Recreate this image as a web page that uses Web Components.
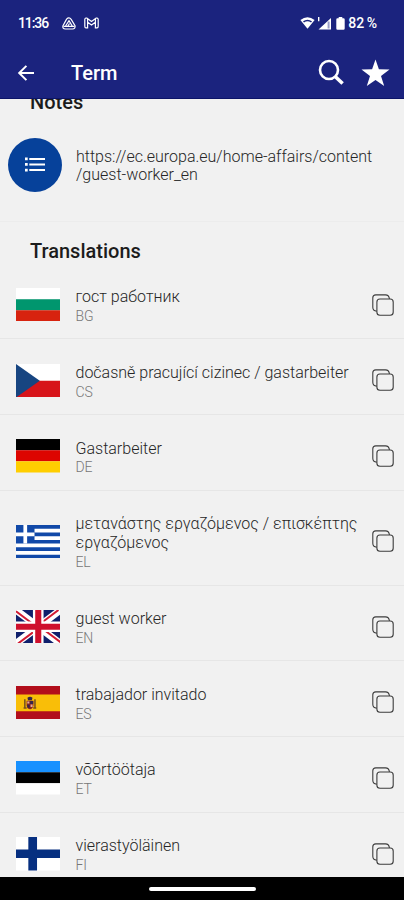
<!DOCTYPE html>
<html lang="en"><head><meta charset="utf-8"><title>Term</title>
<style>html,body{margin:0;height:100%;overflow:hidden;background:#f1f1f1;font-family:Roboto,"Liberation Sans",sans-serif}</style></head>
<body><term-app></term-app>
<script>
const define=(name,css,html)=>customElements.define(name,class extends HTMLElement{
  constructor(){super();this.attachShadow({mode:'open'})}
  connectedCallback(){this.shadowRoot.innerHTML='<style>*{box-sizing:border-box}svg{display:block}'+css+'</style>'+(typeof html==='function'?html(this):html)}
});

define('status-bar',`:host{display:flex;align-items:center;height:46px;padding:0 27px 0 18px;color:#fff;font:500 14px Roboto,sans-serif}
.time{width:44px;letter-spacing:-1.1px}.pct{margin-left:3px;letter-spacing:0;word-spacing:-1px}.gap{flex:1}`,
`<span class="time">11:36</span>
<svg width="14" height="13" viewBox="0 0 14 13" fill="none" stroke="#fff" stroke-width="1.2"><path d="M4.6 2.2Q7-.4 9.2 2.4L13 8.7Q13.5 12 10.5 12H3.5Q.2 11.8 1 8.7Z"/><path d="M3.4 9.3 7 3.6l3.4 5.7M5.6 9.5 7.5 6.5M1.5 9.3H12.5"/></svg>
<svg style="margin-left:8px" width="15" height="12" viewBox="0 0 15 12" fill="none" stroke="#fff" stroke-width="1.2"><path d="M3.6 10.9H2Q.8 10.9.8 9.2V2.5Q1 .6 2.8 1.1L7.5 4.6 12.2 1.1Q14 .6 14.2 2.5V9.2Q14.2 10.9 13 10.9H11.4V5.2L7.5 8 3.6 5.2ZM3.6 1.5V5M11.4 1.5V5"/></svg>
<span class="gap"></span>
<svg width="15" height="12" viewBox="0 0 15 12"><path fill="#fff" d="M.4 3.1Q7.5-2.5 14.6 3.1L7.5 11.8Z"/><path d="M3 4.3Q7.5 1.1 12 4.3L11 5.4Q7.5 3.3 4 5.4Z" fill="#1b237e"/></svg>
<svg style="margin-left:2px" width="15" height="13" viewBox="0 0 15 13"><path fill="#fff" d="M1 0h1.4v4.2H1zM14 1v11.5H1.5Z"/><path fill="#1b237e" opacity=".45" d="M10.6 4.5h2v7h-2z"/></svg>
<svg style="margin-left:4px" width="9" height="13" viewBox="0 0 9 13"><path fill="#fff" d="M2.7 0h3.6v1.2H7.5Q8.7 1.2 8.7 2.4V11.6Q8.7 12.8 7.5 12.8H1.5Q.3 12.8.3 11.6V2.4Q.3 1.2 1.5 1.2H2.7Z"/></svg>
<span class="pct">82 %</span>`);

define('app-bar',`:host{display:flex;align-items:center;height:52px;padding:1px 14px 0 17px;color:#fff}
h1{margin:0 0 0 35px;flex:1;font:500 20px/24px Roboto,sans-serif}`,
`<svg width="19" height="18" viewBox="0 0 19 18" fill="none" stroke="#fff" stroke-width="2"><path d="M17 9H2.5M9.4 1.9 2.2 9l7.2 7.1"/></svg>
<h1>Term</h1>
<svg width="27" height="27" viewBox="0 0 27 27" fill="none" stroke="#fff"><circle cx="11" cy="11" r="9" stroke-width="2.6"/><path d="m17.2 17.5 7.4 7" stroke-width="3.6"/></svg>
<svg style="margin-left:16px" width="29" height="28" viewBox="0 0 29 28"><path fill="#fff" d="M14.5.5 17.9 10.3 28.5 10.5 20 16.9 23.2 27 14.5 21 5.8 27 9 16.9.5 10.5 11.1 10.3Z"/></svg>`);

const FLAGS={
BG:'<path fill="#fff" d="M0 0h44v11H0z"/><path fill="#00966e" d="M0 11h44v11H0z"/><path fill="#d7230f" d="M0 22h44v11H0z"/>',
CS:'<path fill="#fff" d="M0 0h44v17H0z"/><path fill="#d7141a" d="M0 16.5h44V33H0z"/><path fill="#174581" d="m0 0 23.5 16.5L0 33z"/>',
DE:'<path d="M0 0h44v11H0z"/><path fill="#dd0500" d="M0 11h44v11H0z"/><path fill="#ffce00" d="M0 22h44v11H0z"/>',
EL:'<path fill="#fff" d="M0 0h44v33H0z"/><path fill="#1149a8" d="M0 0h44v3.67H0zM0 7.33h44V11H0zM0 14.67h44v3.66H0zM0 22h44v3.67H0zM0 29.33h44V33H0zM0 0h18.3v18.33H0z"/><path fill="#fff" d="M7.33 0H11v18.33H7.33zM0 7.33h18.3V11H0z"/>',
EN:'<path fill="#10206c" d="M0 0h44v33H0z"/><path stroke="#fff" stroke-width="7" d="m0 0 44 33M44 0 0 33"/><path stroke="#d11b32" stroke-width="2" d="m0 1.3 20 15M24 16.7l20 15M42 0 23 14.3M21 18.8 2 33"/><path stroke="#fff" stroke-width="10.5" d="M22 0v33M0 16.5h44"/><path stroke="#cf102d" stroke-width="6" d="M22 0v33M0 16.5h44"/>',
ES:'<path fill="#b20e1b" d="M0 0h44v33H0z"/><path fill="#f9be08" d="M0 8.25h44v16.5H0z"/><path fill="#765021" d="M8 13h1.5v9H8zM18 13h1.5v9H18zM7.5 21h3v1.5h-3zM17 21h3v1.5h-3z"/><path fill="#8d2520" d="M10.5 14.5h6.7v5q-.8 3.4-3.3 3.4-2.8 0-3.4-3.4z"/><path fill="#35264c" d="M11.3 11.5q2.6-1.8 5 0l-.6 2.5h-3.8zM14 14.7h3v3h-3zM11 18.5h2.5v3h-2z"/><path fill="#ddb0a0" d="M11.2 15.2h2v2h-2zM14.4 18.3h2v2.4h-2z"/>',
ET:'<path fill="#1891ff" d="M0 0h44v11H0z"/><path d="M0 11h44v11H0z"/><path fill="#fff" d="M0 22h44v11H0z"/>',
FI:'<path fill="#fff" d="M0 0h44v33H0z"/><path fill="#062f80" d="M12.2 0h8.6v33h-8.6zM0 12.3h44v8.4H0z"/>'};
define('country-flag',`:host{display:block;width:44.5px;height:33.5px}svg{width:100%;height:100%}`,
 e=>`<svg viewBox="0 0 44 33" preserveAspectRatio="none">${FLAGS[e.getAttribute('code')]}</svg>`);

define('copy-icon',`:host{display:block;width:22px;height:22px}`,
`<svg width="22" height="22" viewBox="0 0 22 22" fill="none" stroke="#3c3c3c" stroke-width="1.1"><rect x="4.9" y="5" width="16.3" height="16.2" rx="3"/><path d="M4.8 17.2Q.8 16.8.8 13.2V3.8Q.8.9 3.8.9H13.5Q16.8.9 17.5 4.8"/></svg>`);

define('translation-row',`:host{display:grid;grid-template-columns:60px 1fr 36px;align-items:center;padding:7.3px 0 0 15.5px;height:var(--h,75.75px);border-bottom:1.5px solid #e6e6e6}
.t{font-size:16px;line-height:18.9px;color:#262626;font-weight:300;white-space:nowrap;letter-spacing:0}
.c{font-size:14px;line-height:19.5px;color:#777;font-weight:300;letter-spacing:-.2px}.b{padding-top:5px}copy-icon{margin-left:4px}`,
 e=>`<country-flag code="${e.getAttribute('code')}"></country-flag><div class="b"><div class="t"><slot></slot></div><div class="c">${e.getAttribute('code')}</div></div><copy-icon></copy-icon>`);

define('section-title',`:host{display:block;font:500 20px/24px Roboto,sans-serif;color:#1c1c1c;padding-left:30px}`,`<slot></slot>`);

define('note-item',`:host{display:flex;gap:14px;padding:0 8.5px;height:83px;align-items:flex-start}
.i{width:54px;height:54px;border-radius:50%;background:#06419a;display:grid;place-items:center}
.t{padding-top:10px;font-size:16px;font-weight:300;line-height:18.5px;color:#262626;white-space:nowrap;letter-spacing:0}`,
`<div class="i"><svg width="20" height="15" viewBox="0 0 20 15" fill="#fff"><path d="M0 .5h2.7v2.7H0zM0 6.1h2.7v2.7H0zM0 11.7h2.7v2.7H0zM4.3.9H20v2H4.3zM4.3 6.5H20v2H4.3zM4.3 12.1H20v2H4.3z"/></svg></div><div class="t"><slot></slot></div>`);

define('nav-bar',`:host{display:grid;place-items:center;height:23px;background:#000}i{width:107px;height:4px;border-radius:2px;background:#fff;margin-top:1px}`,`<i></i>`);

define('term-app',`:host{display:flex;flex-direction:column;width:404px;height:900px;background:#f1f1f1}
header{background:#1b237e;height:99px;flex:none;border-bottom:1px solid #0c1468}
main{flex:1;overflow:hidden;min-height:0}
.notes{margin-top:-9px;height:47.5px}.note{height:84px;margin-left:-.5px;border-bottom:1.5px solid #ececec}
.tr{height:42.2px;padding-top:17px}nav-bar{flex:none}`,
`<header><status-bar></status-bar><app-bar></app-bar></header>
<main><section-title class="notes">Notes</section-title>
<note-item class="note">https://ec.europa.eu/home-affairs/content<br>/guest-worker_en</note-item>
<section-title class="tr">Translations</section-title>
<translation-row code="BG">гост работник</translation-row>
<translation-row code="CS">dočasně pracující cizinec / gastarbeiter</translation-row>
<translation-row code="DE">Gastarbeiter</translation-row>
<translation-row code="EL" style="--h:94.7px">μετανάστης εργαζόμενος / επισκέπτης<br>εργαζόμενος</translation-row>
<translation-row code="EN">guest worker</translation-row>
<translation-row code="ES">trabajador invitado</translation-row>
<translation-row code="ET">võõrtöötaja</translation-row>
<translation-row code="FI">vierastyöläinen</translation-row></main>
<nav-bar></nav-bar>`);
</script></body></html>
